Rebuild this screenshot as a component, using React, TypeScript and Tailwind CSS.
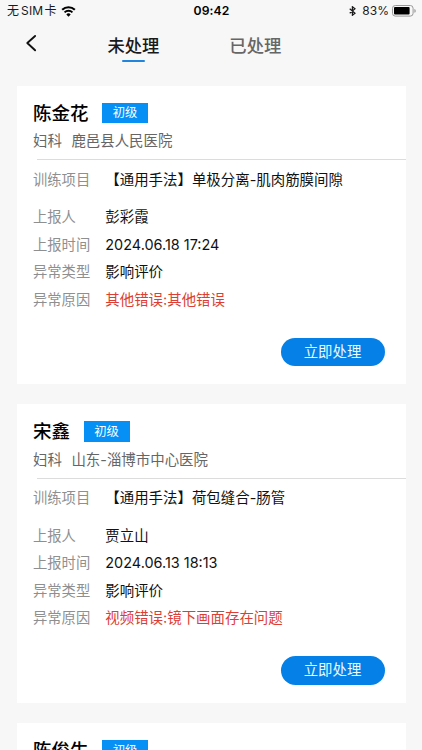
import React from 'react';

interface Report {
  id: number;
  name: string;
  level: string;
  department: string;
  hospital: string;
  project: string;
  reporter: string;
  time: string;
  type: string;
  reason: string;
}

const reports: Report[] = [
  {
    id: 1,
    name: '陈金花',
    level: '初级',
    department: '妇科',
    hospital: '鹿邑县人民医院',
    project: '【通用手法】单极分离-肌肉筋膜间隙',
    reporter: '彭彩霞',
    time: '2024.06.18 17:24',
    type: '影响评价',
    reason: '其他错误:其他错误',
  },
  {
    id: 2,
    name: '宋鑫',
    level: '初级',
    department: '妇科',
    hospital: '山东-淄博市中心医院',
    project: '【通用手法】荷包缝合-肠管',
    reporter: '贾立山',
    time: '2024.06.13 18:13',
    type: '影响评价',
    reason: '视频错误:镜下画面存在问题',
  },
];

const StatusBar = () => (
  <div className="grid h-[22px] grid-cols-3 items-center pl-[7px] pr-[6px] text-[12.5px] leading-none text-[#1a1a1a]">
    <div className="flex items-center text-[12px]">
      <span>无</span>
      <span className="ml-[2px] tracking-[0.2px]">SIM</span>
      <span className="ml-[1px]">卡</span>
      <svg className="ml-[5px] text-black" width="15" height="11" viewBox="0 0 16 12" fill="none" stroke="currentColor">
        <path d="M1.1 4.2a9.8 9.8 0 0 1 13.8 0" strokeWidth="2.3" />
        <path d="M3.7 7a6.1 6.1 0 0 1 8.6 0" strokeWidth="2.1" />
        <path d="M8 11.6 5.6 9.2a3.4 3.4 0 0 1 4.8 0z" fill="currentColor" stroke="none" />
      </svg>
    </div>
    <div className="text-center text-[12.2px] font-semibold tracking-[0.1px] text-black">09:42</div>
    <div className="flex items-center justify-end">
      <svg width="7" height="10" viewBox="0 0 7 10" fill="none" stroke="currentColor" strokeWidth="1.2">
        <path d="M0.7 2.8 6 7.2 3.4 9.3V0.7L6 2.8 0.7 7.2" />
      </svg>
      <span className="ml-[6px] text-[12px]">83%</span>
      <svg className="ml-[3px]" width="24" height="12" viewBox="0 0 24 12" fill="none">
        <rect x="0.5" y="0.5" width="20.6" height="10.6" rx="2.8" stroke="#999" />
        <rect x="2" y="2" width="15.6" height="7.6" rx="1" fill="#000" />
        <path d="M22.4 4v3.8c.9-.3 1.3-1 1.3-1.9S23.3 4.3 22.4 4z" fill="#999" />
      </svg>
    </div>
  </div>
);

const Header = () => (
  <div className="flex h-[63.5px] items-start">
    <button className="ml-[25px] mt-[12px] flex h-[18px] w-[12px] items-center">
      <svg width="12" height="18" viewBox="0 0 12 18" fill="none" stroke="#111" strokeWidth="1.9" strokeLinecap="round" strokeLinejoin="round">
        <path d="M10.1 2 2.3 9l7.8 7.3" />
      </svg>
    </button>
    <div className="ml-[70.5px] flex flex-col items-center">
      <span className="mt-[12px] text-[17.3px] font-medium leading-[24px] text-[#1a1a1a]">未处理</span>
      <span className="mt-[2px] h-[2px] w-[23px] rounded-full bg-[#1f85dd]" />
    </div>
    <span className="ml-[70px] mt-[12px] text-[17.3px] font-medium leading-[24px] text-[#666]">已处理</span>
  </div>
);

const CardTitle = ({ name, level }: { name: string; level: string }) => (
  <div className="flex h-[27px] items-center">
    <span className="text-[18.5px] font-medium leading-[27px] text-black">{name}</span>
    <span className="ml-[13.5px] flex h-[20.5px] w-[46px] items-center justify-center bg-[#0690f5] pt-[1px] text-[12.3px] leading-none text-white">
      {level}
    </span>
  </div>
);

const Row = ({ label, value, danger }: { label: string; value: string; danger?: boolean }) => (
  <div className="flex h-[27.5px] items-center whitespace-nowrap">
    <span className="w-[72.3px] shrink-0 text-[#8f8f8f]">{label}</span>
    <span className={danger ? 'text-[14.45px] text-[#dc3d34]' : 'text-[14.45px] text-[#111]'}>{value}</span>
  </div>
);

const ReportCard = ({ report }: { report: Report }) => (
  <div className="h-[298.4px] shrink-0 bg-white pl-[16.5px] pt-[14px] text-[14.3px] leading-[20px]">
    <CardTitle name={report.name} level={report.level} />
    <div className="mt-[4.5px] flex text-[14.45px] text-[#666]">
      <span>{report.department}</span>
      <span className="ml-[9.5px]">{report.hospital}</span>
    </div>
    <div className="ml-[3.5px] mt-[8px] h-px bg-[#dcdcdc]" />
    <div className="mt-[6px]">
      <Row label="训练项目" value={report.project} />
      <div className="mt-[10px]">
        <Row label="上报人" value={report.reporter} />
        <Row label="上报时间" value={report.time} />
        <Row label="异常类型" value={report.type} />
        <Row label="异常原因" value={report.reason} danger />
      </div>
    </div>
    <div className="mr-[20.5px] mt-[24px] flex justify-end">
      <button className="h-[28.5px] w-[104px] rounded-full bg-[#0480e6] pr-[1px] text-[14.4px] leading-[20px] text-[#e8fbff]">立即处理</button>
    </div>
  </div>
);

export default function App() {
  return (
    <div className="flex h-[750px] w-full flex-col overflow-hidden bg-[#f7f7f7] font-['Inter','Noto_Sans_CJK_SC',sans-serif]">
      <StatusBar />
      <Header />
      <div className="flex min-h-0 flex-1 flex-col gap-[20.3px] overflow-hidden px-[16.5px]">
        {reports.map((report) => (
          <ReportCard key={report.id} report={report} />
        ))}
        {/* Next card, only its top is visible */}
        <div className="min-h-0 flex-1 overflow-hidden bg-white pl-[16.5px] pt-[14px]">
          <CardTitle name="陈俊生" level="初级" />
        </div>
      </div>
    </div>
  );
}
